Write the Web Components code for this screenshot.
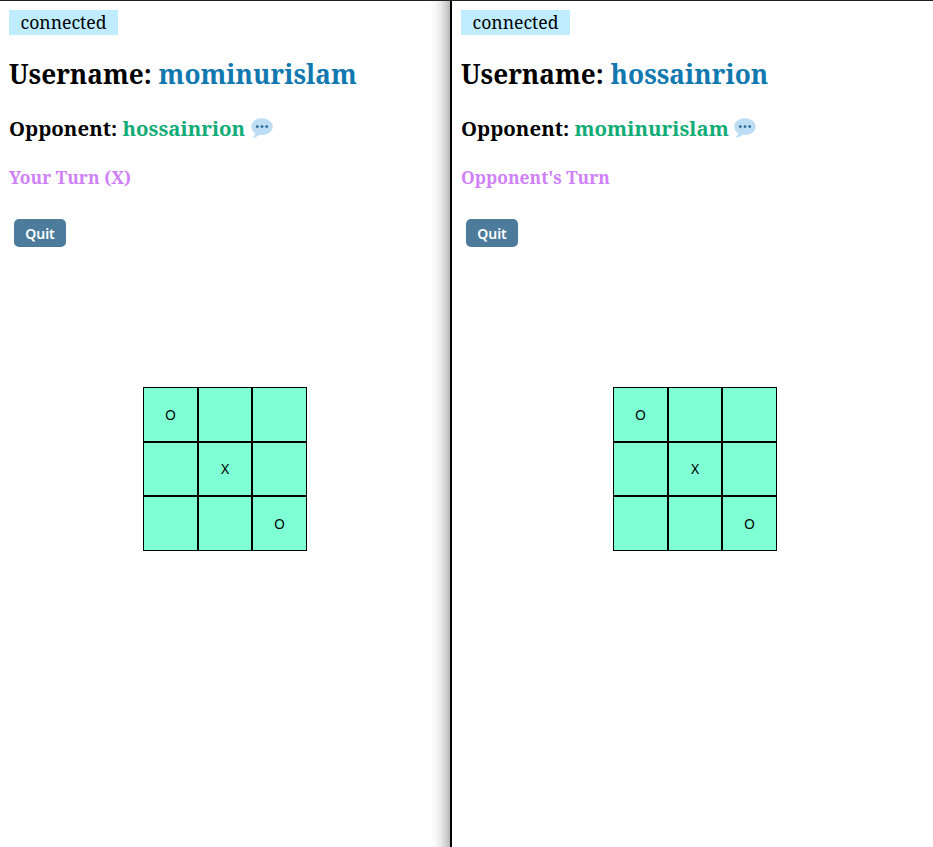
<!DOCTYPE html>
<html lang="en"><head><meta charset="utf-8"><title>Tic Tac Toe</title>
<style>html,body{margin:0;height:100%;overflow:hidden;background:#fff}</style></head>
<body>
<game-split>
<player-panel name="mominurislam" opponent="hossainrion" turn="Your Turn (X)" style="--board:143px"></player-panel>
<player-panel name="hossainrion" opponent="mominurislam" turn="Opponent's Turn" style="--board:161px"></player-panel>
</game-split>
<script>
class GameSplit extends HTMLElement{
  constructor(){super();this.attachShadow({mode:'open'}).innerHTML=`<style>
  :host{display:grid;grid-template-columns:452px 481px;height:847px;box-sizing:border-box;border-top:1px solid #242226;background:#fff}
  ::slotted(:first-child){border-right:2px solid #000;background:linear-gradient(to left,#b8b8b8 0,#d0d0d0 4px,#e8e8e8 9px,#f7f7f7 14px,#fff 20px)}
  </style><slot></slot>`}
}
class ChatIcon extends HTMLElement{
  constructor(){super();this.attachShadow({mode:'open'}).innerHTML=`<style>:host{display:block;width:22px;height:20px;white-space:normal}svg{display:block}</style>
  <svg width="22" height="20" viewBox="0 0 22 20"><path fill="#bdddf4" d="M11 .3C5 .3.3 4 .3 8.6c0 2.900 1.600 5.200 4 6.700C4 17 2.800 18.500 1.300 19.500c2.700.2 5.200-.9 7-2.700.9.2 1.800.2 2.700.2 6 0 10.700-3.700 10.700-8.400C21.700 4 17 .3 11 .3z"/><g fill="#2a6797"><circle cx="6.300" cy="8.600" r="1.400"/><circle cx="11" cy="8.600" r="1.400"/><circle cx="15.700" cy="8.600" r="1.400"/></g></svg>`}
}
class GameBoard extends HTMLElement{
  constructor(){super();const m=['O','','','','X','','','','O'];this.attachShadow({mode:'open'}).innerHTML=`<style>
  :host{display:grid;grid-template:55px 54px 55px/55px 54px 55px;width:164px;font:14px "Noto Sans",sans-serif;color:#000}
  div{box-sizing:border-box;border:1px solid #000;background:#7fffd4;display:flex;align-items:center;justify-content:center;line-height:18px}
  </style>${m.map(v=>`<div>${v}</div>`).join('')}`}
}
class PlayerPanel extends HTMLElement{
  constructor(){super();this.attachShadow({mode:'open'})}
  connectedCallback(){const a=n=>this.getAttribute(n);this.shadowRoot.innerHTML=`<style>
  :host{display:flex;flex-direction:column;align-items:flex-start;box-sizing:border-box;padding:9px 0 0 9px;font-family:"Noto Serif",serif;color:#000}
  .status{box-sizing:border-box;width:109px;height:25px;background:#bfecff;font-size:17.6px;line-height:25px;text-align:center}
  h2,h3,h4{margin:0;display:flex;white-space:pre;font-weight:700}
  h2{font-size:26.2px;line-height:36px;margin-top:21px}
  h3{font-size:20.4px;line-height:28px;margin-top:22px}
  h4{font-size:17.45px;line-height:24px;margin-top:23px;color:#cf81f7}
  h2 span{color:#1179b0}h3 span{color:#12ac77}
  chat-icon{margin:4px 0 0 5.500px}
  button{box-sizing:border-box;width:52px;height:28px;margin:30px 0 0 5px;padding:1px 0 0;border:0;border-radius:5px;background:#4c7b9b;color:#fff;font:600 14px/27px "Noto Sans",sans-serif}
  game-board{margin:140px 0 0 calc(var(--board) - 9px)}
  </style><div class="status">connected</div>
  <h2>Username: <span>${a('name')}</span></h2>
  <h3>Opponent: <span>${a('opponent')}</span><chat-icon></chat-icon></h3>
  <h4>${a('turn')}</h4><button>Quit</button><game-board></game-board>`}
}
customElements.define('chat-icon',ChatIcon);customElements.define('game-board',GameBoard);customElements.define('player-panel',PlayerPanel);customElements.define('game-split',GameSplit);
</script></body></html>
